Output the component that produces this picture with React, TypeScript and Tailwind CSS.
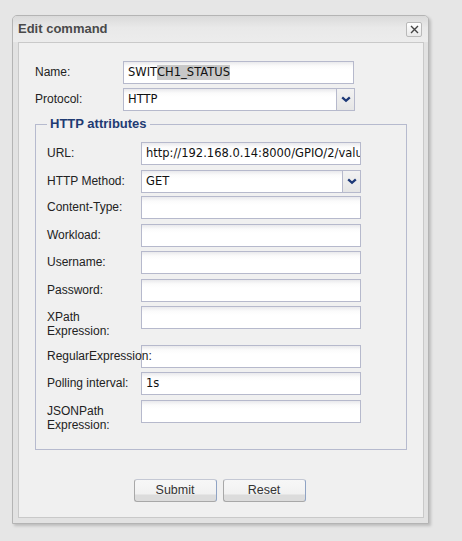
import React from 'react';

type Row = {
  label: string[];
  value?: string;
  select?: boolean;
  gap: string;
};

const rows: Row[] = [
  { label: ['URL:'], value: 'http://192.168.0.14:8000/GPIO/2/value', gap: '' },
  { label: ['HTTP Method:'], value: 'GET', select: true, gap: 'mt-[5px]' },
  { label: ['Content-Type:'], gap: 'mt-[3px]' },
  { label: ['Workload:'], gap: 'mt-[5px]' },
  { label: ['Username:'], gap: 'mt-[4px]' },
  { label: ['Password:'], gap: 'mt-[5px]' },
  { label: ['XPath', 'Expression:'], gap: 'mt-[4px]' },
  { label: ['RegularExpression:'], gap: 'mt-[7px]' },
  { label: ['Polling interval:'], value: '1s', gap: 'mt-[4px]' },
  { label: ['JSONPath', 'Expression:'], gap: 'mt-[5px]' },
];

const fieldBg = 'bg-[linear-gradient(to_bottom,#e9e9ec_0px,#fbfbfb_4px,#ffffff_8px)]';
const valueText = "font-['DejaVu_Sans',sans-serif] text-[11.5px] text-[#111]";

const Chevron = () => (
  <svg width="10" height="7" viewBox="0 0 10 7">
    <polyline points="1.2,1.3 5,4.8 8.8,1.3" fill="none" stroke="#1e3a78" strokeWidth="2.3" />
  </svg>
);

const TextBox: React.FC<{ value?: string; width: string }> = ({ value, width }) => (
  <div
    className={`${width} h-[23px] shrink-0 border border-[#b6b9cc] ${fieldBg} pl-[4px] flex items-center overflow-hidden whitespace-nowrap ${valueText}`}
  >
    {value}
  </div>
);

const SelectBox: React.FC<{ value: string; width: string }> = ({ value, width }) => (
  <div className={`${width} h-[23px] shrink-0 border border-[#b6b9cc] bg-white flex`}>
    <div className={`flex-1 ${fieldBg} pl-[4px] flex items-center ${valueText}`}>{value}</div>
    <div className="w-[18px] border-l border-[#b6b9cc] bg-[linear-gradient(to_bottom,#f2f2f2,#e6e6e6)] flex items-center justify-center">
      <Chevron />
    </div>
  </div>
);

const Label: React.FC<{ lines: string[]; width: string }> = ({ lines, width }) => (
  <div className={`${width} shrink-0 pt-[4px] leading-[14px] text-[12px] text-[#222] whitespace-nowrap relative z-10`}>
    {lines.map((l) => (
      <div key={l}>{l}</div>
    ))}
  </div>
);

const Button: React.FC<{ children: React.ReactNode }> = ({ children }) => (
  <button className="w-[83px] h-[23px] rounded-[3px] border border-[#a8a8a8] border-t-[#c4c8d4] border-r-[#8fa3c4] bg-[linear-gradient(to_bottom,#f7f7f7_0%,#f1f1f1_68%,#dcdcdc_70%,#dcdcdc_100%)] text-[12.5px] text-[#333] leading-none">
    {children}
  </button>
);

export default function App() {
  return (
    <div className="min-h-screen bg-[#e6e6e6] pt-[15px] pl-[12px] font-['Liberation_Sans',Arial,sans-serif]">
      <div className="w-[417px] h-[509px] rounded-t-[5px] border border-[#b4b4b4] bg-[#e2e2e2] shadow-[2px_2px_3px_rgba(0,0,0,0.18)] pl-[5px] pr-[4px] pb-[5px] flex flex-col">
        {/* header */}
        <div className="h-[26px] shrink-0 -ml-[5px] -mr-[4px] pl-[5px] pr-[6px] flex items-center justify-between rounded-t-[4px] bg-[linear-gradient(to_bottom,#dadada,#e9e9e9_45%,#ececec)]">
          <span className="text-[13px] font-bold text-[#4a4a4a]">Edit command</span>
          <div className="w-[16px] h-[15px] mt-[1px] rounded-[2px] border border-[#b9b9b9] bg-[linear-gradient(to_bottom,#ffffff,#e9e9e9)] flex items-center justify-center">
            <svg width="9" height="9" viewBox="0 0 9 9">
              <path d="M1 1L8 8M8 1L1 8" stroke="#444" strokeWidth="1.4" />
            </svg>
          </div>
        </div>

        {/* body */}
        <div className="flex-1 border border-[#c9c9c9] bg-[#f0f0f0] pl-[16px] pt-[18px]">
          <div className="flex flex-col gap-[4px]">
            <div className="flex items-start">
              <Label lines={['Name:']} width="w-[88px]" />
              <div className={`w-[231px] h-[23px] border border-[#b6b9cc] ${fieldBg} pl-[4px] flex items-center whitespace-nowrap ${valueText}`}>
                SWIT<span className="bg-[#c8c8c8] leading-[15px]">CH1_STATUS</span>
              </div>
            </div>
            <div className="flex items-start">
              <Label lines={['Protocol:']} width="w-[88px]" />
              <SelectBox value="HTTP" width="w-[232px]" />
            </div>
          </div>

          <fieldset className="mt-[6px] w-[372px] border border-[#b6bace] pl-[11px] pt-[11px] pb-[17px]">
            <legend className="px-[3px] text-[13px] leading-[14px] font-bold text-[#1f3b73]">HTTP attributes</legend>
            {rows.map((r) => (
              <div key={r.label.join(' ')} className={`flex items-start ${r.gap}`}>
                <Label lines={r.label} width="w-[94px]" />
                {r.select ? (
                  <SelectBox value={r.value ?? ''} width="w-[220px]" />
                ) : (
                  <TextBox value={r.value} width="w-[220px]" />
                )}
              </div>
            ))}
          </fieldset>

          <div className="mt-[29px] flex justify-center gap-[6px] pr-[19px]">
            <Button>Submit</Button>
            <Button>Reset</Button>
          </div>
        </div>
      </div>
    </div>
  );
}
